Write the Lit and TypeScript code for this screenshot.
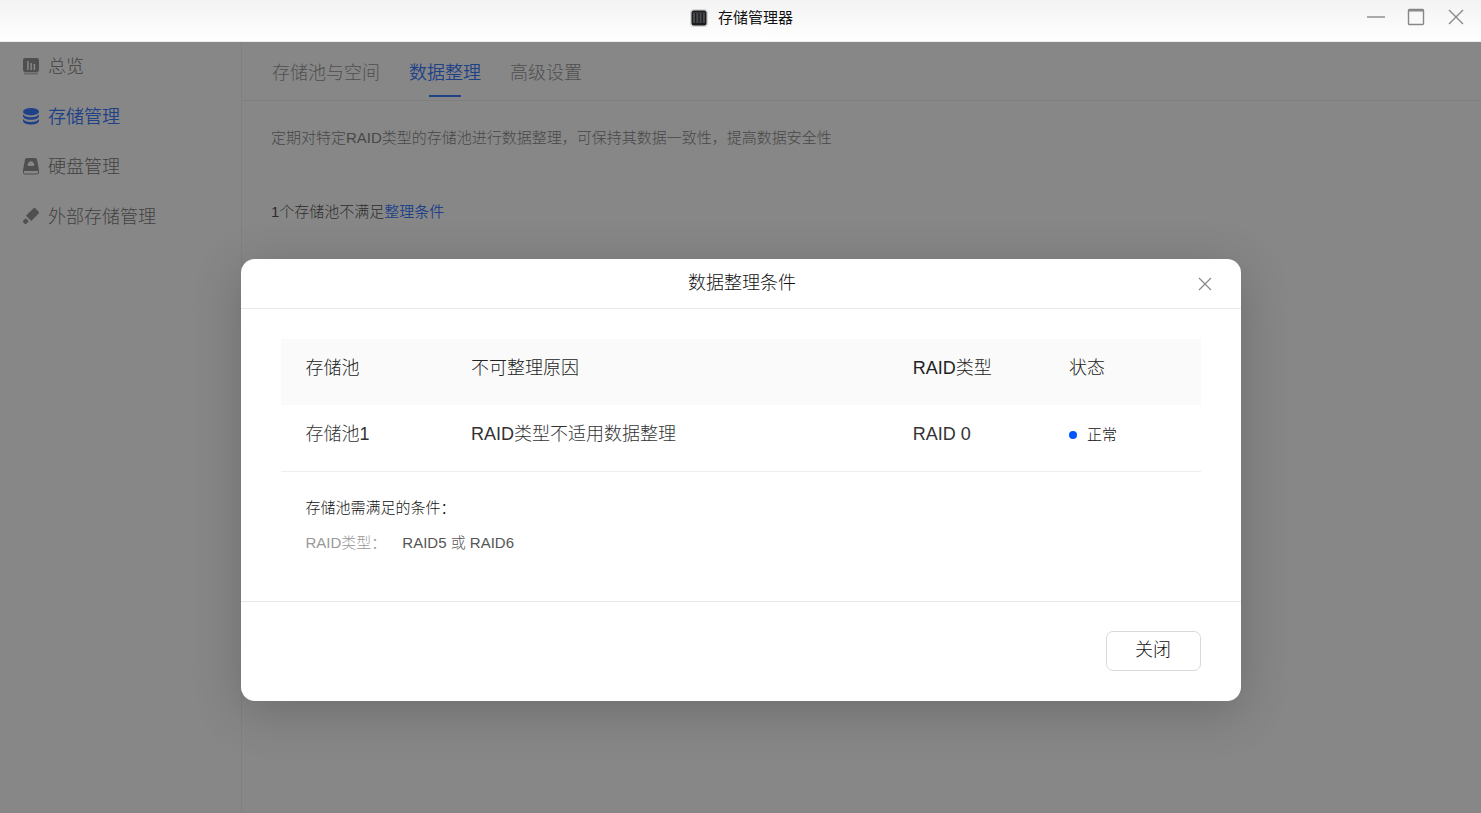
import { LitElement, html, css, svg } from "lit";
import { customElement, state } from "lit/decorators.js";

const icons: Record<string, unknown> = {
  overview: svg`
    <path fill-rule="evenodd" d="M2 0h12a2 2 0 0 1 2 2v10a2 2 0 0 1-2 2H2a2 2 0 0 1-2-2V2a2 2 0 0 1 2-2zm2.200 3v9h1.500V3zm3.200 2v7h1.500V5zm3.200 1v6h1.500V6z"/>
    <path opacity=".55" d="M1 14.500h14V16a1 1 0 0 1-1 .5H2a1 1 0 0 1-1-.5z"/>`,
  storage: svg`
    <ellipse cx="8" cy="3.700" rx="8" ry="3.700"/>
    <path d="M0 6.200c1 2 4.200 3 8 3s7-1 8-3v1.800c0 2.200-3.600 3.800-8 3.800S0 10.200 0 8z"/>
    <path d="M0 10.900c1 2 4.200 3 8 3s7-1 8-3v1.800c0 2.200-3.600 3.800-8 3.800s-8-1.600-8-3.800z"/>`,
  disk: svg`
    <path fill-rule="evenodd" d="M4 0h8a2 2 0 0 1 2 1.500L16 12H0L2 1.500A2 2 0 0 1 4 0zm1.800 8h4.400a1.400 1.400 0 0 0 .4-2.700 2.700 2.700 0 0 0-5.200 0A1.400 1.400 0 0 0 5.800 8z"/>
    <path fill-rule="evenodd" d="M0 12h16v2.500a2 2 0 0 1-2 2H2a2 2 0 0 1-2-2zm1 1v1.400a1 1 0 0 0 1 1h12a1 1 0 0 0 1-1V13z"/>`,
  usb: svg`
    <path d="M10.300.5a1.600 1.600 0 0 1 2.200 0l3 3a1.600 1.600 0 0 1 0 2.200L8.300 13 3 7.700z"/>
    <path d="M2.800 10.200l3 3-2.400 2.600a1.200 1.200 0 0 1-1.700 0L.3 14.300a1.200 1.200 0 0 1 0-1.700z"/>`,
};

@customElement("app-root")
export class AppRoot extends LitElement {
  @state() private open = true;

  static styles = css`
    :host {
      display: flex;
      flex-direction: column;
      min-height: 100vh;
      background: #fff;
      color: #111;
      font: 300 15px/20px "Liberation Sans", "Noto Sans CJK SC", sans-serif;
    }
    * { box-sizing: border-box; }
    button {
      font: inherit;
      color: inherit;
      background: none;
      border: 0;
      padding: 0;
      cursor: pointer;
    }
    a { color: inherit; text-decoration: none; }
    svg { display: block; }
    .titlebar {
      display: grid;
      grid-template-columns: 1fr auto 1fr;
      align-items: center;
      height: 42px;
      padding: 0 16px 8px;
      background: linear-gradient(#f3f3f3, #fff);
      border-bottom: 1px solid #eee;
    }
    .brand {
      grid-column: 2;
      display: flex;
      align-items: center;
      gap: 10px;
      margin: 0;
      padding: 2px 0 0 2px;
      font-size: 15px;
      font-weight: 400;
      color: #111;
    }
    .window-buttons {
      display: flex;
      justify-content: flex-end;
      gap: 22px;
      color: #888;
    }
    .body {
      position: relative;
      flex: 1;
      display: flex;
    }
    .sidebar {
      flex: none;
      width: 242px;
      border-right: 1px solid #eee;
    }
    .nav {
      display: flex;
      align-items: center;
      gap: 9px;
      height: 50px;
      padding: 0 0 1px 23px;
      font-size: 18px;
      line-height: 22px;
      color: #555;
    }
    .nav svg { fill: #777; }
    .nav.active { color: #05f; font-weight: 350; }
    .nav.active svg { fill: #05f; }
    .content { flex: 1; min-width: 0; }
    .tabs {
      display: flex;
      gap: 29px;
      height: 59px;
      padding: 0 30px;
      border-bottom: 1px solid #eee;
    }
    .tab {
      display: flex;
      flex-direction: column;
      align-items: center;
      gap: 12px;
      padding-top: 21px;
      font-size: 18px;
      color: #777;
    }
    .tab.active { color: #05f; font-weight: 350; }
    .tab.active::after {
      content: "";
      width: 32px;
      height: 2px;
      background: #05f;
    }
    .page { padding: 27px 29px; }
    .page p { margin: 0 0 54px; }
    .intro { color: #666; }
    .notice { color: #222; }
    .link { color: #05f; font-weight: 350; }
    .mask {
      position: absolute;
      inset: 0;
      display: flex;
      align-items: center;
      justify-content: center;
      padding: 105px 20px 0;
      background: rgba(51, 51, 51, 0.59);
    }
    .dialog {
      width: 100%;
      max-width: 1000px;
      background: #fff;
      border-radius: 14px;
      box-shadow: 0 10px 50px rgba(0, 0, 0, 0.2);
    }
    .dialog-head {
      display: grid;
      grid-template-columns: 1fr auto 1fr;
      align-items: center;
      height: 50px;
      padding: 0 29px;
      border-bottom: 1px solid #e8e8e8;
    }
    .dialog-title {
      grid-column: 2;
      margin: 0;
      padding: 0 0 2px 3px;
      font-size: 18px;
      font-weight: 300;
    }
    .close { justify-self: end; color: #888; }
    .dialog-body { padding: 30px 40px 48px; }
    table {
      width: 100%;
      border-collapse: collapse;
      table-layout: fixed;
      font-size: 18px;
    }
    th, td {
      height: 66px;
      padding: 0 0 8px 25px;
      text-align: left;
      font-weight: 300;
    }
    thead { background: #fafafa; }
    th { color: #222; }
    tbody tr { border-bottom: 1px solid #eee; }
    tbody td { color: #333; }
    .col-pool { width: 18%; }
    .col-type { width: 17%; }
    .col-state { width: 17%; }
    .status {
      display: flex;
      align-items: center;
      gap: 10px;
      padding-top: 2px;
      font-size: 15px;
      color: #111;
    }
    .dot {
      width: 8px;
      height: 8px;
      border-radius: 50%;
      background: #05f;
    }
    .rules { padding: 26px 25px 0; }
    .rules h3 {
      margin: 0 0 15px;
      font-size: 15px;
      font-weight: 300;
    }
    .rules dl { display: flex; gap: 16px; margin: 0; }
    .rules dt { color: #999; }
    .rules dd { margin: 0; color: #555; }
    .dialog-foot {
      display: flex;
      justify-content: flex-end;
      padding: 29px 40px 30px;
      border-top: 1px solid #e8e8e8;
    }
    .button {
      width: 95px;
      height: 40px;
      padding-bottom: 2px;
      border: 1px solid #d9d9d9;
      border-radius: 7px;
      font-size: 18px;
    }
  `;

  private nav(icon: string, label: string, active = false) {
    return html`<a class="nav ${active ? "active" : ""}" href="#${icon}">
      <svg width="16" height="17" viewBox="0 0 16 17" aria-hidden="true">${icons[icon]}</svg>
      <span>${label}</span>
    </a>`;
  }

  private dialog() {
    return html`<div class="mask">
      <section class="dialog" role="dialog" aria-labelledby="dialog-title">
        <header class="dialog-head">
          <h2 class="dialog-title" id="dialog-title">数据整理条件</h2>
          <button class="close" aria-label="关闭" @click=${() => (this.open = false)}>
            <svg width="14" height="14" viewBox="0 0 14 14" fill="none" stroke="currentColor" stroke-width="1.200">
              <path d="M1 1l12 12M13 1L1 13" />
            </svg>
          </button>
        </header>
        <div class="dialog-body">
          <table>
            <colgroup>
              <col class="col-pool" /><col /><col class="col-type" /><col class="col-state" />
            </colgroup>
            <thead>
              <tr><th>存储池</th><th>不可整理原因</th><th>RAID类型</th><th>状态</th></tr>
            </thead>
            <tbody>
              <tr>
                <td>存储池1</td>
                <td>RAID类型不适用数据整理</td>
                <td>RAID 0</td>
                <td><span class="status"><i class="dot"></i>正常</span></td>
              </tr>
            </tbody>
          </table>
          <div class="rules">
            <h3>存储池需满足的条件：</h3>
            <dl><dt>RAID类型：</dt><dd>RAID5 或 RAID6</dd></dl>
          </div>
        </div>
        <footer class="dialog-foot">
          <button class="button" @click=${() => (this.open = false)}>关闭</button>
        </footer>
      </section>
    </div>`;
  }

  render() {
    return html`
      <header class="titlebar">
        <h1 class="brand">
          <svg width="18" height="18" viewBox="0 0 18 18" aria-hidden="true">
            <rect width="18" height="18" rx="4" fill="#d6d6d6" />
            <rect x="1.500" y="1.500" width="15" height="15" rx="2.500" fill="#1c1d1f" />
            <path d="M4 4v10M7.300 4v10M10.600 4v10M13.900 4v10" stroke="#484a4e" stroke-width="2" />
            <path d="M2.500 3.500h13" stroke="#303236" />
          </svg>
          存储管理器
        </h1>
        <div class="window-buttons">
          <button aria-label="最小化">
            <svg width="18" height="18" viewBox="0 0 18 18" stroke="currentColor" stroke-width="1.400"><path d="M0 9h18" /></svg>
          </button>
          <button aria-label="最大化">
            <svg width="18" height="18" viewBox="0 0 18 18" fill="none" stroke="currentColor">
              <rect x="1.500" y="1.500" width="15" height="15" rx="1" stroke-width="1.400" />
              <path d="M1.500 2.500h15" stroke-width="2" />
            </svg>
          </button>
          <button aria-label="关闭窗口">
            <svg width="18" height="18" viewBox="0 0 18 18" fill="none" stroke="currentColor" stroke-width="1.400">
              <path d="M2 2l14 14M16 2L2 16" />
            </svg>
          </button>
        </div>
      </header>
      <div class="body">
        <nav class="sidebar">
          ${this.nav("overview", "总览")}
          ${this.nav("storage", "存储管理", true)}
          ${this.nav("disk", "硬盘管理")}
          ${this.nav("usb", "外部存储管理")}
        </nav>
        <main class="content">
          <div class="tabs">
            <a class="tab" href="#pools">存储池与空间</a>
            <a class="tab active" href="#scrub">数据整理</a>
            <a class="tab" href="#advanced">高级设置</a>
          </div>
          <div class="page">
            <p class="intro">定期对特定RAID类型的存储池进行数据整理，可保持其数据一致性，提高数据安全性</p>
            <p class="notice">1个存储池不满足<a class="link" href="#rules" @click=${() => (this.open = true)}>整理条件</a></p>
          </div>
        </main>
        ${this.open ? this.dialog() : ""}
      </div>
    `;
  }
}
